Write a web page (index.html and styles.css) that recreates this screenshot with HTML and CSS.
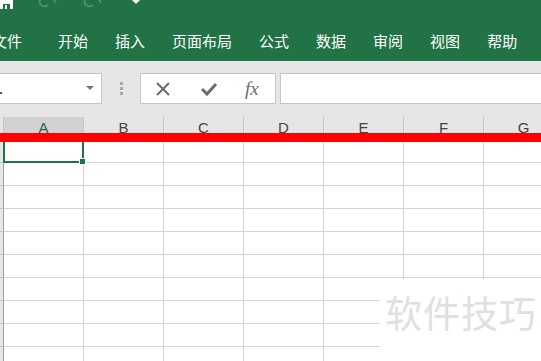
FILE: index.html
```html
<!DOCTYPE html>
<html lang="zh-CN">
<head>
  <meta charset="UTF-8" />
  <title>Excel</title>
  <link rel="stylesheet" href="styles.css">
</head>
<body>
  <div class="titlebar">
    <div class="qat">
      <svg class="save" width="14" height="10" viewBox="0 0 14 10"><rect x="0" y="-2" width="13" height="11" fill="#fff"/><rect x="3" y="4" width="7" height="5" fill="#217346"/><rect x="5" y="5" width="2" height="4" fill="#fff"/></svg>
      <svg class="undo" width="24" height="10" viewBox="0 0 24 10"><path d="M4 0 C2 5 8 8 12 5" stroke="#4f8e6c" stroke-width="2" fill="none"/><path d="M18 0 L20 3" stroke="#4f8e6c" stroke-width="2"/></svg>
      <svg class="undo" width="24" height="10" viewBox="0 0 24 10"><path d="M4 0 C2 5 8 8 12 5" stroke="#4f8e6c" stroke-width="2" fill="none"/><path d="M18 0 L20 3" stroke="#4f8e6c" stroke-width="2"/></svg>
      <svg class="more" width="8" height="5" viewBox="0 0 8 5"><path d="M0 0 L8 0 L4 4 Z" fill="#fff"/></svg>
    </div>
    <div class="tabs">
      <span class="tab first">文件</span>
      <span class="tab">开始</span>
      <span class="tab">插入</span>
      <span class="tab">页面布局</span>
      <span class="tab">公式</span>
      <span class="tab">数据</span>
      <span class="tab">审阅</span>
      <span class="tab">视图</span>
      <span class="tab">帮助</span>
    </div>
  </div>

  <div class="formula-bar">
    <div class="name-box">
      <span class="dot"></span>
      <svg width="8" height="5" viewBox="0 0 8 5"><path d="M0 0 L8 0 L4 4 Z" fill="#777"/></svg>
    </div>
    <div class="grip"><i></i><i></i><i></i></div>
    <div class="fx-buttons">
      <svg width="16" height="16" viewBox="0 0 16 16"><path d="M2 2 L14 14 M14 2 L2 14" stroke="#6b6b6b" stroke-width="2"/></svg>
      <svg width="18" height="16" viewBox="0 0 18 16"><path d="M2 8 L7 13 L16 3" stroke="#6b6b6b" stroke-width="3" fill="none"/></svg>
      <span class="fx">fx</span>
    </div>
    <div class="formula-input"></div>
  </div>

  <div class="sheet">
    <div class="col-headers">
      <div class="corner"></div>
      <div class="col selected">A</div>
      <div class="col">B</div>
      <div class="col">C</div>
      <div class="col">D</div>
      <div class="col">E</div>
      <div class="col">F</div>
      <div class="col">G</div>
    </div>
    <div class="rows">
      <div class="row"><div class="rh"></div><div class="cell active"></div><div class="cell"></div><div class="cell"></div><div class="cell"></div><div class="cell"></div><div class="cell"></div><div class="cell"></div></div>
      <div class="row"><div class="rh"></div><div class="cell"></div><div class="cell"></div><div class="cell"></div><div class="cell"></div><div class="cell"></div><div class="cell"></div><div class="cell"></div></div>
      <div class="row"><div class="rh"></div><div class="cell"></div><div class="cell"></div><div class="cell"></div><div class="cell"></div><div class="cell"></div><div class="cell"></div><div class="cell"></div></div>
      <div class="row"><div class="rh"></div><div class="cell"></div><div class="cell"></div><div class="cell"></div><div class="cell"></div><div class="cell"></div><div class="cell"></div><div class="cell"></div></div>
      <div class="row"><div class="rh"></div><div class="cell"></div><div class="cell"></div><div class="cell"></div><div class="cell"></div><div class="cell"></div><div class="cell"></div><div class="cell"></div></div>
      <div class="row"><div class="rh"></div><div class="cell"></div><div class="cell"></div><div class="cell"></div><div class="cell"></div><div class="cell"></div><div class="cell"></div><div class="cell"></div></div>
      <div class="row"><div class="rh"></div><div class="cell"></div><div class="cell"></div><div class="cell"></div><div class="cell"></div><div class="cell"></div><div class="cell"></div><div class="cell"></div></div>
      <div class="row"><div class="rh"></div><div class="cell"></div><div class="cell"></div><div class="cell"></div><div class="cell"></div><div class="cell"></div><div class="cell"></div><div class="cell"></div></div>
      <div class="row"><div class="rh"></div><div class="cell"></div><div class="cell"></div><div class="cell"></div><div class="cell"></div><div class="cell"></div><div class="cell"></div><div class="cell"></div></div>
      <div class="row"><div class="rh"></div><div class="cell"></div><div class="cell"></div><div class="cell"></div><div class="cell"></div><div class="cell"></div><div class="cell"></div><div class="cell"></div></div>
    </div>
    <div class="red-line"></div>
    <div class="watermark">软件技巧</div>
  </div>
</body>
</html>
```

FILE: styles.css
```css
body {
  margin: 0;
  width: 541px;
  height: 361px;
  overflow: hidden;
  font-family: "Noto Sans CJK SC", "Liberation Sans", sans-serif;
  background-color: #fff;
}
.titlebar {
  height: 61px;
  background-color: #217346;
  color: #fff;
}
.qat {
  height: 14px;
  display: flex;
  align-items: flex-start;
}
.qat .save {
  margin-right: 22px;
}
.qat .undo {
  margin-right: 21px;
}
.qat .more {
  margin-left: 6px;
}
.tabs {
  display: flex;
  gap: 27px;
  margin-left: -8px;
  margin-top: 13px;
  font-size: 15px;
  line-height: 28px;
  white-space: nowrap;
}
.tab.first {
  margin-right: 9px;
}
.formula-bar {
  height: 56px;
  background-color: #e6e6e6;
  display: flex;
  align-items: flex-start;
  padding-top: 12px;
  box-sizing: border-box;
}
.name-box, .fx-buttons, .formula-input {
  height: 31px;
  box-sizing: border-box;
  background-color: #fff;
  border: 1px solid #c6c6c6;
}
.name-box {
  width: 102px;
  border-left: none;
  display: flex;
  align-items: center;
  justify-content: space-between;
  padding-right: 7px;
}
.name-box .dot {
  width: 2px;
  height: 2px;
  background-color: #555;
  margin-top: 8px;
}
.grip {
  width: 38px;
  display: flex;
  flex-direction: column;
  align-items: center;
  gap: 2px;
  padding-top: 9px;
}
.grip i {
  width: 3px;
  height: 3px;
  background-color: #a8a8a8;
}
.fx-buttons {
  width: 136px;
  display: flex;
  align-items: center;
  gap: 29px;
  padding-left: 14px;
}
.fx {
  font-family: "Liberation Serif", serif;
  font-style: italic;
  font-size: 19px;
  color: #6b6b6b;
  margin-left: -2px;
}
.formula-input {
  flex: 1;
  margin-left: 4px;
  border-right: none;
}
.sheet {
  position: relative;
}
.col-headers {
  height: 23px;
  display: flex;
  background-color: #e6e6e6;
  border-bottom: 1px solid #c6c6c6;
  box-sizing: border-box;
}
.corner {
  width: 4px;
  flex-shrink: 0;
  box-sizing: border-box;
  border-right: 1px solid #c6c6c6;
}
.col {
  width: 80px;
  flex-shrink: 0;
  box-sizing: border-box;
  border-right: 1px solid #c6c6c6;
  font-family: "Liberation Sans", sans-serif;
  font-size: 15px;
  color: #444;
  text-align: center;
  line-height: 22px;
}
.col.selected {
  background-color: #d2d2d2;
  color: #2f5d45;
  border-bottom: 2px solid #217346;
}
.row {
  display: flex;
  height: 23px;
}
.rh {
  width: 4px;
  flex-shrink: 0;
  background-color: #e6e6e6;
  border-right: 1px solid #9e9e9e;
  border-bottom: 1px solid #c6c6c6;
  box-sizing: border-box;
}
.cell {
  width: 80px;
  flex-shrink: 0;
  box-sizing: border-box;
  border-right: 1px solid #d4d4d4;
  border-bottom: 1px solid #d4d4d4;
}
.cell.active {
  position: relative;
  border: 2px solid #217346;
  margin-left: -1px;
  width: 81px;
}
.cell.active::after {
  content: "";
  position: absolute;
  right: -4px;
  bottom: -4px;
  width: 5px;
  height: 5px;
  background-color: #217346;
  border: 1px solid #fff;
}
.red-line {
  position: absolute;
  left: 0;
  right: 0;
  top: 16px;
  height: 9px;
  background-color: #ff0000;
}
.watermark {
  position: absolute;
  left: 380px;
  top: 162px;
  width: 170px;
  height: 90px;
  background-color: #fff;
  color: #e0e0e0;
  font-size: 37px;
  letter-spacing: 1px;
  line-height: 46px;
  padding-left: 5px;
  padding-top: 10px;
  box-sizing: border-box;
}
```
